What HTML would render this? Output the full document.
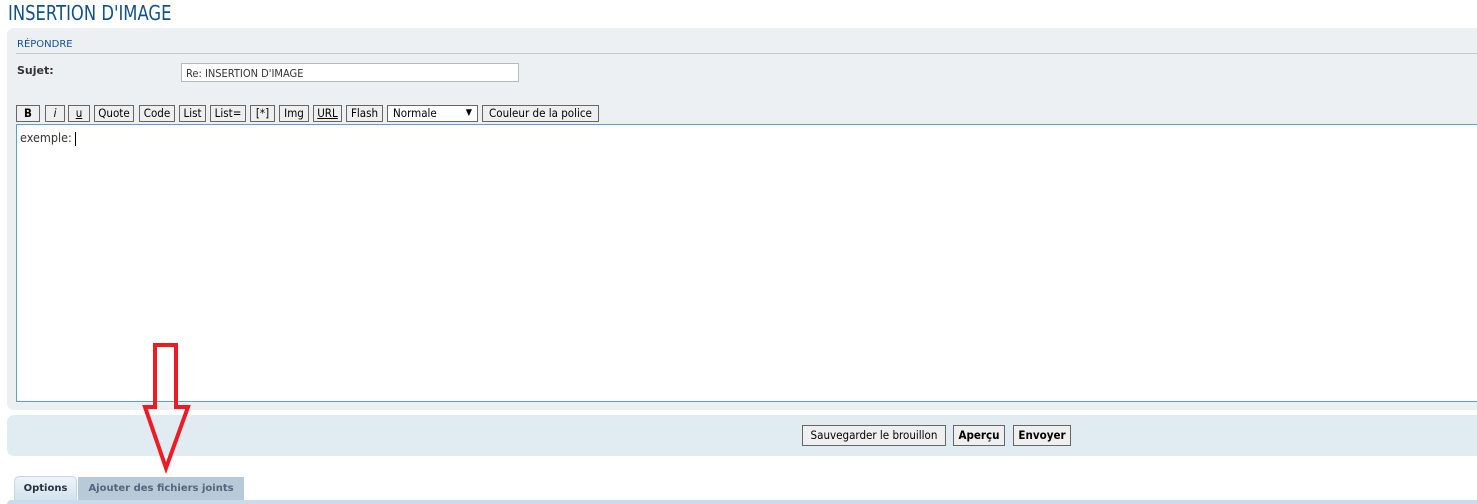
<!DOCTYPE html>
<html><head><meta charset="utf-8"><style>
body{margin:0;width:1477px;height:504px;overflow:hidden;background:#fff;font-family:"DejaVu Sans","Liberation Sans",sans-serif;position:relative}
div,span{position:absolute;box-sizing:border-box}
.t{left:8px;top:1px;font-family:"DejaVu Sans",sans-serif;font-size:20px;color:#105289;transform:scaleX(0.82);transform-origin:0 0}
.p1{left:7px;top:28px;width:1480px;height:382px;background:#ECF0F3;border-radius:7px}
.rep{left:17px;top:39px;font-size:10px;color:#115098}
.hr{left:16px;top:53px;width:1470px;height:1px;background:#c6c9cc}
.suj{left:17px;top:64px;font-size:11px;font-weight:bold;color:#333}
.inp{left:181px;top:63px;width:338px;height:19px;background:#fff;border:1px solid #b4bac0;font-size:11px;color:#333;padding:3px 0 0 4px;font-family:"DejaVu Sans Condensed","DejaVu Sans",sans-serif}
.b{top:105px;height:17px;background:#efefef;border:1px solid #666;font-size:11.5px;color:#000;text-align:center;line-height:15px;font-family:"DejaVu Sans Condensed","DejaVu Sans",sans-serif;white-space:nowrap}
.ta{left:16px;top:124px;width:1470px;height:278px;background:#fff;border:1px solid #5b9ee0;font-size:12.5px;color:#333;padding:5px 0 0 3px;font-family:"DejaVu Sans Condensed","DejaVu Sans",sans-serif}
.p2{left:7px;top:415px;width:1480px;height:41px;background:#E1EBF2;border-radius:7px}
.bb{top:425px;height:21px;background:#efefef;border:1px solid #666;font-size:11.5px;color:#000;line-height:19px;text-align:center;font-family:"DejaVu Sans Condensed","DejaVu Sans",sans-serif;white-space:nowrap}
.tab{top:476px;height:25px;font-size:10px;font-weight:bold;text-align:center;line-height:24px;border-radius:5px 5px 0 0}
</style></head><body>
<div class="t">INSERTION D'IMAGE</div>
<div class="p1"></div>
<div class="rep">RÉPONDRE</div>
<div class="hr"></div>
<div class="suj">Sujet:</div>
<div class="inp">Re: INSERTION D'IMAGE</div>
<div class="b" style="left:16px;width:24px;font-weight:bold">B</div>
<div class="b" style="left:45px;width:20px;font-style:italic">i</div>
<div class="b" style="left:68px;width:22px;text-decoration:underline">u</div>
<div class="b" style="left:94px;width:40px">Quote</div>
<div class="b" style="left:139px;width:36px">Code</div>
<div class="b" style="left:179px;width:27px">List</div>
<div class="b" style="left:210px;width:36px">List=</div>
<div class="b" style="left:250px;width:25px">[*]</div>
<div class="b" style="left:279px;width:30px">Img</div>
<div class="b" style="left:313px;width:29px;text-decoration:underline">URL</div>
<div class="b" style="left:346px;width:37px">Flash</div>
<div class="b" style="left:387px;width:91px;background:#fff;text-align:left;padding-left:5px">Normale<span style="right:5px;top:0;font-size:9px">▼</span></div>
<div class="b" style="left:482px;width:117px">Couleur de la police</div>
<div class="ta">exemple: <span style="position:relative;display:inline-block;width:1px;height:14px;background:#000;vertical-align:middle"></span></div>
<div class="p2"></div>
<div class="bb" style="left:802px;width:144px">Sauvegarder le brouillon</div>
<div class="bb" style="left:953px;width:52px;font-weight:bold">Aperçu</div>
<div class="bb" style="left:1013px;width:58px;font-weight:bold">Envoyer</div>
<div class="tab" style="left:14px;width:63px;background:linear-gradient(#eef4f9,#d2e1ec);border:1px solid #c6d6e3;border-bottom:none;color:#28313f">Options</div>
<div class="tab" style="left:78px;width:166px;top:477px;background:#B8C9D7;color:#536482;border-radius:0">Ajouter des fichiers joints</div>
<div style="left:7px;top:500px;width:1480px;height:4px;background:#CADCEB;border-radius:4px 4px 0 0"></div>
<svg style="position:absolute;left:0;top:0" width="1477" height="504"><path d="M155 345 H176 V407 H188 L166 468 L145 407 H155 Z" fill="none" stroke="#ED1C24" stroke-width="4" stroke-linejoin="miter"/></svg>
</body></html>
